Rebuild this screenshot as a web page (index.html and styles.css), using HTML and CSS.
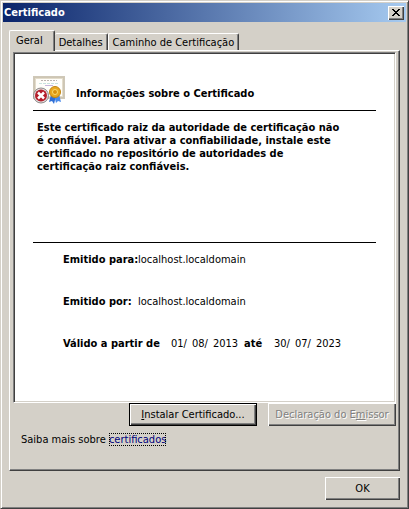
FILE: index.html
```html
<!DOCTYPE html>
<html lang="pt-BR">
<head>
    <meta charset="UTF-8">
    <meta name="viewport" content="width=device-width, initial-scale=1.0">
    <title>Certificado</title>
    <link rel="stylesheet" href="styles.css">
</head>
<body>

<div class="window">
    <header class="titlebar">
        <h1>Certificado</h1>
        <button class="close" type="button" aria-label="Fechar">
            <svg width="8" height="7" viewBox="0 0 8 7" shape-rendering="crispEdges">
                <path d="M0 0h2v1h1v1h2V1h1V0h2v1H7v1H6v1H5v1h1v1h1v1h1v1H6V6H5V5H3v1H2v1H0V6h1V5h1V4h1V3H2V2H1V1H0z"/>
            </svg>
        </button>
    </header>

    <main class="content">
        <div class="tabs" role="tablist">
            <button class="tab active" type="button" role="tab" aria-selected="true">Geral</button>
            <button class="tab" type="button" role="tab" aria-selected="false">Detalhes</button>
            <button class="tab" type="button" role="tab" aria-selected="false">Caminho de Certificação</button>
        </div>

        <div class="panel" role="tabpanel">
            <div class="certificate">
                <div class="heading">
                    <svg class="icon" width="32" height="30" viewBox="0 0 32 30">
                        <rect x=".5" y="1.5" width="31" height="22" fill="#e3dccb" stroke="#cfc8b8"/>
                        <rect x="1.5" y="2.5" width="29" height="20" fill="none" stroke="#b9b09c" stroke-dasharray="1 1"/>
                        <rect x="3" y="4" width="26" height="17" fill="#fffefa"/>
                        <path d="M8 5.5h16" stroke="#bbb3b0" stroke-dasharray="2 1"/>
                        <path d="M6 8.5h20" stroke="#c9e3df" stroke-dasharray="3 1"/>
                        <path d="M12 10.5h8" stroke="#c5b4dc"/>
                        <path d="M18 20l-2 7 3-1 2 3 2-8z" fill="#2f6fd6"/>
                        <path d="M21 20l2 8 2-2 3 1-2-8z" fill="#4b8bea"/>
                        <circle cx="22" cy="17" r="5.5" fill="#e9a820" stroke="#c28410"/>
                        <circle cx="22" cy="17" r="2.5" fill="#d8900c" stroke="#fbdc70"/>
                        <circle cx="8" cy="20.5" r="7.5" fill="#e4e0e0" stroke="#8c8888"/>
                        <circle cx="8" cy="20.5" r="6" fill="#b51f2b"/>
                        <path d="M5 17.5l6 6m0-6l-6 6" stroke="#fff" stroke-width="2.5"/>
                    </svg>
                    <h2>Informações sobre o Certificado</h2>
                </div>

                <p class="message">Este certificado raiz da autoridade de certificação não<br>é confiável. Para ativar a confiabilidade, instale este<br>certificado no repositório de autoridades de<br>certificação raiz confiáveis.</p>

                <dl class="details">
                    <div class="row">
                        <dt>Emitido para:</dt>
                        <dd>localhost.localdomain</dd>
                    </div>
                    <div class="row">
                        <dt>Emitido por:</dt>
                        <dd>localhost.localdomain</dd>
                    </div>
                    <div class="row validity">
                        <dt>Válido a partir de</dt>
                        <dd class="date"><span>01/</span> <span>08/</span> <span>2013</span></dd>
                        <dt>até</dt>
                        <dd class="date"><span>30/</span> <span>07/</span> <span>2023</span></dd>
                    </div>
                </dl>
            </div>

            <div class="actions">
                <button class="btn default" type="button"><span><u>I</u>nstalar Certificado...</span></button>
                <button class="btn" type="button" disabled><span>Declaração do E<u>m</u>issor</span></button>
            </div>

            <p class="more">Saiba mais sobre <a href="#certificados">certificados</a></p>
        </div>

        <footer class="footer">
            <button class="btn ok" type="button">OK</button>
        </footer>
    </main>
</div>

</body>
</html>
```

FILE: styles.css
```css
* {
    box-sizing: border-box;
}
body {
    margin: 0;
    background-color: #d4d0c8;
    color: #000;
    font-family: Tahoma, "DejaVu Sans Condensed", "DejaVu Sans", sans-serif;
    font-size: 11px;
    line-height: 13px;
}
h1, h2, p, dl, dd {
    margin: 0;
    font-size: 11px;
}
button {
    margin: 0;
    padding: 0;
    border: none;
    background-color: #d4d0c8;
    color: #000;
    font: inherit;
}
.window {
    display: flex;
    flex-direction: column;
    min-height: 100vh;
    padding: 1px;
    border: 1px solid #d4d0c8;
    border-right-color: #404040;
    border-bottom-color: #404040;
    box-shadow: inset 1px 1px #fff, inset -1px -1px #808080;
}

/* Title bar */
.titlebar {
    display: flex;
    align-items: center;
    justify-content: space-between;
    height: 19px;
    margin: 1px;
    padding: 0 2px 0 1px;
    background: linear-gradient(to right, #0a246a, #a6caf0);
}
.titlebar h1 {
    color: #fff;
}
.close {
    display: flex;
    align-items: center;
    justify-content: center;
    width: 16px;
    height: 14px;
    box-shadow: inset 1px 1px #fff, inset -1px -1px #404040, inset -2px -2px #808080;
}

/* Tabs */
.content {
    display: flex;
    flex: 1;
    flex-direction: column;
    padding: 7px;
}
.tabs {
    display: flex;
    align-items: flex-end;
    height: 20px;
}
.tab {
    height: 17px;
    padding: 0 4px;
    border-top: 1px solid #fff;
    border-right: 1px solid #404040;
    border-radius: 2px 2px 0 0;
    box-shadow: inset -1px 0 #808080;
}
.tab + .tab {
    border-left: 1px solid #fff;
}
.tab.active {
    position: relative;
    height: 21px;
    margin-bottom: -1px;
    padding: 0 11px 2px 6px;
    border-left: 1px solid #fff;
}
.tab.active + .tab {
    border-left: none;
}
.panel {
    flex: 1;
    padding: 1px 3px;
    border: 1px solid #fff;
    border-right-color: #404040;
    border-bottom-color: #404040;
    box-shadow: inset -1px -1px #808080;
}

/* Certificate */
.certificate {
    height: 351px;
    padding: 22px 19px;
    border: 1px solid #808080;
    border-right-color: #fff;
    border-bottom-color: #fff;
    background-color: #fff;
    box-shadow: inset 1px 1px #404040, inset -1px -1px #d4d0c8;
}
.heading {
    display: flex;
    gap: 11px;
    height: 36px;
    border-bottom: 1px solid #000;
}
.icon {
    flex: none;
}
.heading h2 {
    padding-top: 12px;
}
.message {
    height: 132px;
    padding: 10px 4px;
    border-bottom: 1px solid #000;
    font-weight: bold;
    white-space: nowrap;
}
.details {
    display: flex;
    flex-direction: column;
    gap: 29px;
    padding: 10px 0 0 30px;
    white-space: nowrap;
}
.row {
    display: grid;
    grid-template-columns: 75px 1fr;
}
.row dt {
    font-weight: bold;
}
.row.validity {
    grid-template-columns: 108px 73px 30px 1fr;
}
.date {
    display: flex;
    gap: 5px;
}

/* Buttons */
.actions {
    display: flex;
    justify-content: flex-end;
    gap: 11px;
}
.btn {
    width: 128px;
    height: 23px;
    box-shadow: inset 1px 1px #fff, inset -1px -1px #404040, inset -2px -2px #808080;
}
.btn.default {
    border: 1px solid #000;
}
.btn:disabled {
    color: #808080;
    text-shadow: 1px 1px #fff;
}
.more {
    padding: 7px 8px;
}
.more a {
    color: #00007b;
    outline: 1px dotted #000;
    outline-offset: -1px;
    text-decoration: none;
}
.footer {
    display: flex;
    justify-content: flex-end;
    padding-top: 6px;
}
.btn.ok {
    width: 75px;
}
```
